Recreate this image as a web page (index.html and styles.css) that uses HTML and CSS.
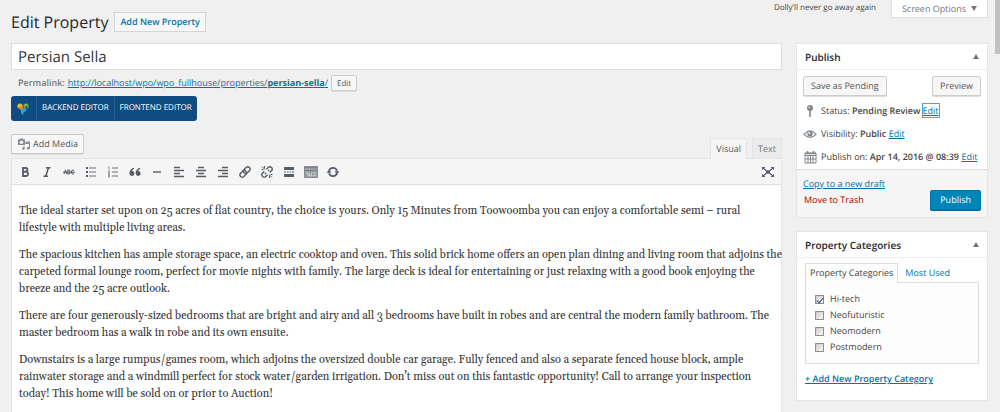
FILE: index.html
```html
<!DOCTYPE html>
<html lang="en">
<head>
<meta charset="utf-8">
<title>Edit Property</title>
<link rel="stylesheet" href="styles.css">
</head>
<body>
<div class="page">
  <header class="top">
    <div class="heading">
      <h1>Edit Property</h1>
      <a class="add-new" href="#">Add New Property</a>
    </div>
    <p class="dolly">Dolly’ll never go away again</p>
    <button class="screen-options" type="button">Screen Options <span class="arrow down"></span></button>
  </header>

  <div class="columns">
    <main class="main">
      <input class="title" type="text" aria-label="Title" value="Persian Sella">
      <div class="permalink">
        <span class="permalink-label">Permalink:</span>
        <a href="#">http://localhost/wpo/wpo_fullhouse/properties/<b>persian-sella</b>/</a>
        <button class="btn small" type="button">Edit</button>
      </div>
      <nav class="composer">
        <span class="composer-logo">
          <svg width="12" height="12" viewBox="0 0 12 12" aria-hidden="true">
            <circle cx="3" cy="3" r="2.6" fill="#f0b323"/><circle cx="9" cy="3" r="2.6" fill="#7cb342"/>
            <circle cx="4.4" cy="5.2" r="1.8" fill="#f58220"/><circle cx="9.4" cy="4" r="1.1" fill="#0b4778"/>
            <path d="M4 7c1-2 4-2 5-1 1 2-1 3-2 3l-1 3-2-2z" fill="#29a3d8"/>
          </svg>
        </span>
        <a href="#">BACKEND EDITOR</a>
        <a href="#">FRONTEND EDITOR</a>
      </nav>
      <div class="editor-head">
        <button class="btn media" type="button">
          <svg width="13" height="12" viewBox="0 0 13 12" aria-hidden="true">
            <path d="M1 1.5h1.500l.7-1h2.600l.7 1H8V7H1z" fill="#82878c"/><circle cx="4.5" cy="4.2" r="1.7" fill="#f7f7f7"/>
            <path d="M9 4h3.400v6.300M9 4v1.400h3.400M7 8v3" fill="none" stroke="#82878c" stroke-width="1.1"/>
            <circle cx="11.2" cy="10.3" r="1.3" fill="#82878c"/><circle cx="6.2" cy="10.6" r="1.2" fill="#82878c"/>
          </svg>Add Media</button>
        <div class="editor-tabs">
          <button class="tab active" type="button">Visual</button>
          <button class="tab" type="button">Text</button>
        </div>
      </div>
      <section class="editor">
        <div class="toolbar">
          <button type="button" aria-label="Bold"><svg viewBox="0 0 14 14"><path d="M5 3h2.600a1.800 1.800 0 0 1 0 3.700H5zM5 6.800h3a2.100 2.100 0 0 1 0 4.200H5zM5 3v8" fill="none" stroke="#555d66" stroke-width="1.8"/></svg></button>
          <button type="button" aria-label="Italic"><svg viewBox="0 0 14 14"><path d="M6 2.800h4.500M3.500 11.200H8M8.400 3L5.800 11" fill="none" stroke="#555d66" stroke-width="1.5"/></svg></button>
          <button type="button" aria-label="Strikethrough"><svg viewBox="0 0 14 14"><path d="M2 9.300l1.500-4.500L5 9.300M5.800 5h1.700q1 1 0 2 1.300 1 0 2H5.800zM12 5.300q-2.500-1-2.700 1.700 0 2.700 2.700 2" fill="none" stroke="#555d66"/><path d="M1 7.200h12" stroke="#555d66"/></svg></button>
          <button type="button" aria-label="Bulleted list"><svg viewBox="0 0 14 14"><path d="M5 3h7M5 7h7M5 11h7" stroke="#6c737a" stroke-width="1.200"/><path d="M2 3h2M2 7h2M2 11h2" stroke="#555d66" stroke-width="2"/></svg></button>
          <button type="button" aria-label="Numbered list"><svg viewBox="0 0 14 14"><path d="M6 3h6M6 7h6M6 11h6" stroke="#6c737a" stroke-width="1.200"/><path d="M2 2h1v2.500M2 6h1.500v1L2 8.200h2M2 9.500h1.500v2.500H2M2.300 10.800h1.200" fill="none" stroke="#6c737a" stroke-width=".8"/></svg></button>
          <button type="button" aria-label="Blockquote"><svg viewBox="0 0 14 14"><path d="M6 2.700C3 3.200 1.300 6 1.500 8.500a2.500 2.500 0 1 0 2.600-2.600c0-1 .9-1.700 1.900-2zM12.200 2.700C9.200 3.200 7.500 6 7.700 8.500a2.500 2.500 0 1 0 2.600-2.600c0-1 .9-1.700 1.900-2z" fill="#555d66"/></svg></button>
          <button type="button" aria-label="Horizontal line"><svg viewBox="0 0 14 14"><path d="M3 7h8" stroke="#555d66" stroke-width="1.400"/></svg></button>
          <button type="button" aria-label="Align left"><svg viewBox="0 0 14 14"><path d="M2 2.500h6M2 5.500h10M2 8.500h6M2 11.500h10" stroke="#555d66" stroke-width="1.500"/></svg></button>
          <button type="button" aria-label="Align center"><svg viewBox="0 0 14 14"><path d="M4 2.500h6M2 5.500h10M4 8.500h6M2 11.500h10" stroke="#555d66" stroke-width="1.500"/></svg></button>
          <button type="button" aria-label="Align right"><svg viewBox="0 0 14 14"><path d="M6 2.500h6M2 5.500h10M6 8.500h6M2 11.500h10" stroke="#555d66" stroke-width="1.500"/></svg></button>
          <button type="button" aria-label="Insert link"><svg viewBox="0 0 14 14"><g fill="none" stroke="#555d66" stroke-width="1.400" transform="rotate(-45 7 7)"><rect x=".8" y="4.700" width="7.400" height="4.600" rx="2.300"/><rect x="5.800" y="4.700" width="7.400" height="4.600" rx="2.300"/></g></svg></button>
          <button type="button" aria-label="Remove link"><svg viewBox="0 0 14 14"><g fill="none" stroke="#555d66" stroke-width="1.400" transform="rotate(-45 7 7)"><path d="M5.500 9.300H3a2.300 2.300 0 0 1 0-4.600h2.500M8.500 4.700H11a2.300 2.300 0 0 1 0 4.600H8.500M4 7h1.500M8.500 7H10"/></g><path d="M2 1.500l3 3M1.500 4.500h2M4.500 1v2.500M12 12.500l-3-3M12.500 9.500h-2M9.500 13v-2.500" stroke="#555d66"/></svg></button>
          <button type="button" aria-label="Read more"><svg viewBox="0 0 14 14"><path d="M2 3.500h10M2 10.500h10" stroke="#555d66" stroke-width="3"/><path d="M2 7h2M5 7h1.500M7.500 7H9M10 7h2" stroke="#555d66" stroke-width="1.200"/></svg></button>
          <button type="button" aria-label="Toolbar toggle"><svg viewBox="0 0 14 14"><rect x=".5" y="1.500" width="13" height="11" fill="#9aa0a5"/><path d="M1 2.500h12M1 5.500h12" stroke="#6c737a" stroke-dasharray="1.500 1"/><path d="M2 8h2v3M5.500 8v3h2V8M9 8h3M9 10.500h3" fill="none" stroke="#c8cbce"/><path d="M.5 1.500h13v11H.5z" fill="none" stroke="#858b91"/></svg></button>
          <button type="button" aria-label="Refresh"><svg viewBox="0 0 14 14"><path d="M3 5.800A4.200 4.200 0 0 1 11 5.800M11 8.200A4.200 4.200 0 0 1 3 8.200" fill="none" stroke="#555d66" stroke-width="1.800"/><path d="M8.500 6.300h5L11 9.200zM5.500 7.700h-5L3 4.800z" fill="#555d66"/></svg></button>
          <button class="fullscreen" type="button" aria-label="Fullscreen"><svg viewBox="0 0 14 14"><path d="M2 3l10 8M12 3L2 11" stroke="#555d66" stroke-width="1.200"/><path d="M1 2h3.500L1 5zM13 2H9.500L13 5zM1 12h3.500L1 9zM13 12H9.500L13 9zM5 5.500h4v3H5z" fill="#555d66"/></svg></button>
        </div>
        <div class="content">
          <p>The ideal starter set upon on 25 acres of flat country, the choice is yours. Only 15 Minutes from Toowoomba you can enjoy a comfortable semi – rural<br>lifestyle with multiple living areas.</p>
          <p>The spacious kitchen has ample storage space, an electric cooktop and oven. This solid brick home offers an open plan dining and living room that adjoins the<br>carpeted formal lounge room, perfect for movie nights with family. The large deck is ideal for entertaining or just relaxing with a good book enjoying the<br>breeze and the 25 acre outlook.</p>
          <p>There are four generously-sized bedrooms that are bright and airy and all 3 bedrooms have built in robes and are central the modern family bathroom. The<br>master bedroom has a walk in robe and its own ensuite.</p>
          <p>Downstairs is a large rumpus/games room, which adjoins the oversized double car garage. Fully fenced and also a separate fenced house block, ample<br>rainwater storage and a windmill perfect for stock water/garden irrigation. Don’t miss out on this fantastic opportunity! Call to arrange your inspection<br>today! This home will be sold on or prior to Auction!</p>
        </div>
      </section>
    </main>

    <aside class="side">
      <section class="box">
        <h2>Publish <span class="arrow"></span></h2>
        <div class="publish-body">
          <div class="row-between">
            <button class="btn" type="button">Save as Pending</button>
            <button class="btn" type="button">Preview</button>
          </div>
          <ul class="status">
            <li><svg viewBox="0 0 14 14"><circle cx="7" cy="4" r="3" fill="#82878c"/><path d="M7 6v7" stroke="#82878c" stroke-width="1.600"/><circle cx="6.300" cy="3.300" r=".9" fill="#ddd"/></svg><span>Status: <b>Pending Review</b> <a class="focused" href="#">Edit</a></span></li>
            <li><svg viewBox="0 0 14 14"><path d="M1 7.300Q7 .5 13 7.300 7 13.500 1 7.300z" fill="none" stroke="#82878c" stroke-width="1.200"/><circle cx="7" cy="6.800" r="2.700" fill="#82878c"/><circle cx="6.200" cy="6" r=".9" fill="#fff"/></svg><span>Visibility: <b>Public</b> <a href="#">Edit</a></span></li>
            <li><svg viewBox="0 0 14 14"><path d="M2 3h11v10H2zM2 5.500h11M5 6v7M7.500 6v7M10 6v7M2 9h11" fill="none" stroke="#82878c"/><path d="M2 3.500h11M4.500 1v3M10.500 1v3" stroke="#82878c" stroke-width="1.600"/></svg><span>Publish on: <b>Apr 14, 2016 @ 08:39</b> <a href="#">Edit</a></span></li>
          </ul>
        </div>
        <div class="publish-foot">
          <div class="foot-links">
            <a href="#">Copy to a new draft</a>
            <a class="trash" href="#">Move to Trash</a>
          </div>
          <button class="btn primary" type="button">Publish</button>
        </div>
      </section>

      <section class="box">
        <h2>Property Categories <span class="arrow"></span></h2>
        <div class="cat-body">
          <div class="cat-tabs">
            <a class="current" href="#">Property Categories</a>
            <a href="#">Most Used</a>
          </div>
          <div class="cat-list">
            <label><input type="checkbox" checked>Hi-tech</label>
            <label><input type="checkbox">Neofuturistic</label>
            <label><input type="checkbox">Neomodern</label>
            <label><input type="checkbox">Postmodern</label>
          </div>
          <a class="add-cat" href="#">+ Add New Property Category</a>
        </div>
      </section>
    </aside>
  </div>
  <div class="scroll-thumb"></div>
</div>
</body>
</html>
```
FILE: styles.css
```css
* { box-sizing: border-box; }
body {
  margin: 0;
  background: #f0f0f0;
  color: #444;
  font: 9px/16px "Open Sans", sans-serif;
  text-rendering: geometricPrecision;
}
h1, h2, p, ul { margin: 0; padding: 0; }
a { color: #0073aa; }
b { font-weight: 600; }
button, input { font: inherit; margin: 0; text-rendering: inherit; }
svg { flex: none; }

.page { position: relative; padding: 0 12px 0 11px; height: 100vh; overflow: hidden; }
.scroll-thumb { position: absolute; top: 0; right: 0; width: 5px; height: 54px; background: #c1c1c1; }

.top { display: flex; align-items: flex-start; height: 43px; }
.heading { display: flex; align-items: center; gap: 6px; margin-right: auto; padding-top: 12px; }
h1 { font-size: 16px; line-height: 20px; font-weight: 400; color: #23282d; }
.add-new {
  padding: 0 5px; border: 1px solid #d5d5d5; background: #f7f7f7;
  font-weight: 600; line-height: 18px; text-decoration: none;
}
.dolly { margin-right: 15px; font-size: 8px; }
.screen-options {
  display: flex; align-items: center; gap: 5px; height: 18px; padding: 0 10px;
  border: 1px solid #ddd; border-top: 0; background: #fff; color: #72777c;
}
.arrow { border: 3px solid transparent; border-top: 0; border-bottom: 5px solid #72777c; }
.arrow.down { border-bottom: 0; border-top: 5px solid #72777c; }

.columns { display: flex; gap: 14px; align-items: flex-start; }
.main { flex: 1; min-width: 0; }
.side { width: 192px; flex: none; }

.title {
  display: block; width: 100%; height: 27px; padding: 0 6px; border: 1px solid #ddd;
  background: #fff; color: #32373c; font-size: 15px;
}
.permalink { display: flex; align-items: center; gap: 3px; height: 26px; padding-left: 7px; }
.permalink-label { font-weight: 600; color: #72777c; }
.permalink b { font-weight: 700; }

.btn {
  height: 20px; padding: 0 7px; border: 1px solid #ccc; border-radius: 2px;
  background: #f7f7f7; color: #555; line-height: 16px; box-shadow: 0 1px 0 #ddd; white-space: nowrap;
}
.btn.small { height: 16px; padding: 0 5px; font-size: 8px; line-height: 13px; }
.btn.primary { padding: 0 9px; border-color: #0073aa; background: #0085ba; color: #fff; box-shadow: 0 1px 0 #006799; }

.composer { display: inline-flex; height: 25px; border-radius: 3px; background: #0f4c81; overflow: hidden; vertical-align: top; }
.composer a { padding: 0 5px; border-left: 1px solid #265f92; color: #fff; font-size: 8px; line-height: 24px; text-decoration: none; }
.composer-logo { display: flex; align-items: center; padding: 0 7px 0 6px; }

.editor-head { display: flex; justify-content: space-between; align-items: flex-end; margin-top: 13px; height: 24px; }
.media { display: flex; align-items: center; gap: 3px; align-self: flex-start; padding: 0 5px; }
.editor-tabs { display: flex; gap: 5px; }
.tab { height: 20px; padding: 0 5px; border: 1px solid #e5e5e5; border-bottom: 0; background: #ebebeb; color: #777; }
.tab.active { height: 21px; margin-bottom: -1px; background: #f5f5f5; color: #555; position: relative; }

.editor { border: 1px solid #e5e5e5; background: #fff; }
.toolbar { display: flex; align-items: center; gap: 8px; height: 26px; padding: 0 6px; border-bottom: 1px solid #e0e0e0; background: #f5f5f5; }
.toolbar button { display: flex; width: 14px; padding: 0; border: 0; background: none; }
.toolbar svg { width: 14px; height: 14px; }
.toolbar .fullscreen { margin-left: auto; }
.content {
  padding: 18px 7px; color: #333; white-space: nowrap;
  font: 11px/17px Georgia, Gelasio, "Liberation Serif", serif;
  text-rendering: auto;
}
.content p { margin-bottom: 10px; }

.box { margin-bottom: 13px; border: 1px solid #e5e5e5; background: #fff; }
.box h2 {
  display: flex; justify-content: space-between; align-items: center; height: 26px;
  padding: 0 8px; border-bottom: 1px solid #eee; color: #23282d; font-size: 10px; font-weight: 600;
}
.publish-body { padding: 6px 6px 1px; }
.row-between { display: flex; justify-content: space-between; }
.status { list-style: none; margin-top: 3px; }
.status li { display: flex; align-items: center; gap: 4px; height: 23px; white-space: nowrap; }
.status svg { width: 14px; height: 14px; }
.focused { outline: 1px solid #5b9dd9; }
.publish-foot {
  display: flex; justify-content: space-between; align-items: flex-end;
  padding: 6px 6px 7px; border-top: 1px solid #ddd; background: #f5f5f5;
}
.foot-links { display: flex; flex-direction: column; padding-bottom: 2px; }
.foot-links .trash { padding-left: 1px; color: #a00; text-decoration: none; }

.cat-body { padding: 5px 8px 13px; }
.cat-tabs { display: flex; }
.cat-tabs a { padding: 0 6px; line-height: 18px; border: 1px solid transparent; border-bottom: 0; text-decoration: none; }
.cat-tabs .current { padding: 0 4px; margin-bottom: -1px; border-color: #ddd; background: #fdfdfd; color: #444; position: relative; }
.cat-list { display: flex; flex-direction: column; padding: 8px 9px; border: 1px solid #ddd; background: #fdfdfd; }
.cat-list label { display: flex; align-items: center; gap: 6px; height: 16px; }
.cat-list input { appearance: none; width: 9px; height: 9px; border: 1px solid #8e8f8f; background: linear-gradient(135deg, #ccc, #f8f8f8); }
.cat-list input:checked::before {
  content: ""; display: block; width: 3px; height: 6px; margin-left: 2px;
  border: solid #2b4a8b; border-width: 0 1px 1px 0; transform: rotate(40deg);
}
.add-cat { display: inline-block; margin-top: 7px; font-weight: 600; }
```
